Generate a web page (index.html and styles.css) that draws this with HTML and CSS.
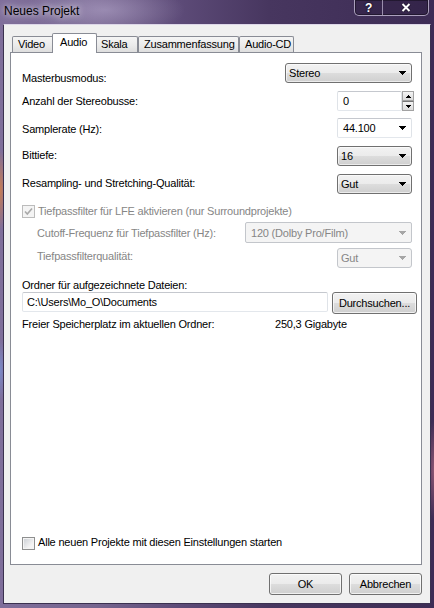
FILE: index.html
```html
<!DOCTYPE html>
<html>
  <head>
    <meta charset="utf-8">
    <title>Neues Projekt</title>
    <link rel="stylesheet" href="styles.css">
  </head>
  <body>
    <div class="window">
      <!-- Titelleiste -->
      <div class="titlebar">
        <span class="title">Neues Projekt</span>
        <div class="caption-buttons">
          <span class="caption-btn help">?</span>
          <span class="caption-btn close">
            <svg width="10" height="9" viewBox="0 0 10 9"><path d="M1.5 1 8.5 8M8.5 1 1.5 8" stroke="#1b1428" stroke-width="3.4"/><path d="M1.5 1 8.5 8M8.5 1 1.5 8" stroke="#fff" stroke-width="2"/></svg>
          </span>
        </div>
      </div>

      <div class="client">
        <div class="tabs">
          <div class="tab tab-video">Video</div>
          <div class="tab tab-audio active">Audio</div>
          <div class="tab tab-skala">Skala</div>
          <div class="tab tab-summary">Zusammenfassung</div>
          <div class="tab tab-cd">Audio-CD</div>
        </div>

        <div class="pane">
          <div class="row row-master">
            <span class="label">Masterbusmodus:</span>
            <div class="combo combo-master">
              <span>Stereo</span>
              <svg class="arrow" width="7" height="4" viewBox="0 0 7 4"><path d="M0 0h7v1h-1v1h-1v1h-1v1h-1v-1h-1v-1h-1v-1h-1z"/></svg>
            </div>
          </div>

          <div class="row row-busses">
            <span class="label">Anzahl der Stereobusse:</span>
            <div class="spinner">
              <div class="textbox spin-text">0</div>
              <div class="spin">
                <span class="spin-btn"><svg width="5" height="3" viewBox="0 0 5 3"><path d="M2 0h1v1h1v1h1v1h-5v-1h1v-1h1z"/></svg></span>
                <span class="spin-btn"><svg width="5" height="3" viewBox="0 0 5 3"><path d="M0 0h5v1h-1v1h-1v1h-1v-1h-1v-1h-1z"/></svg></span>
              </div>
            </div>
          </div>

          <div class="row row-rate">
            <span class="label">Samplerate (Hz):</span>
            <div class="combo combo-small combo-edit">
              <span>44.100</span>
              <svg class="arrow" width="7" height="4" viewBox="0 0 7 4"><path d="M0 0h7v1h-1v1h-1v1h-1v1h-1v-1h-1v-1h-1v-1h-1z"/></svg>
            </div>
          </div>

          <div class="row row-depth">
            <span class="label">Bittiefe:</span>
            <div class="combo combo-small">
              <span>16</span>
              <svg class="arrow" width="7" height="4" viewBox="0 0 7 4"><path d="M0 0h7v1h-1v1h-1v1h-1v1h-1v-1h-1v-1h-1v-1h-1z"/></svg>
            </div>
          </div>

          <div class="row row-quality">
            <span class="label">Resampling- und Stretching-Qualität:</span>
            <div class="combo combo-small">
              <span>Gut</span>
              <svg class="arrow" width="7" height="4" viewBox="0 0 7 4"><path d="M0 0h7v1h-1v1h-1v1h-1v1h-1v-1h-1v-1h-1v-1h-1z"/></svg>
            </div>
          </div>

          <!-- LFE-Optionen, deaktiviert -->
          <div class="row row-lfe">
            <div class="check-label disabled">
              <span class="check check-disabled">
                <svg width="11" height="11" viewBox="0 0 11 11"><path d="M2 5.5 4.3 8 9 2.5" fill="none" stroke="#a9a9a9" stroke-width="1.6"/></svg>
              </span>
              <span>Tiefpassfilter für LFE aktivieren (nur Surroundprojekte)</span>
            </div>
          </div>

          <div class="row row-cutoff">
            <span class="label indent disabled">Cutoff-Frequenz für Tiefpassfilter (Hz):</span>
            <div class="combo combo-cutoff combo-edit combo-disabled">
              <span>120 (Dolby Pro/Film)</span>
              <svg class="arrow" width="7" height="4" viewBox="0 0 7 4"><path d="M0 0h7v1h-1v1h-1v1h-1v1h-1v-1h-1v-1h-1v-1h-1z"/></svg>
            </div>
          </div>

          <div class="row row-lfq">
            <span class="label indent disabled">Tiefpassfilterqualität:</span>
            <div class="combo combo-small combo-disabled">
              <span>Gut</span>
              <svg class="arrow" width="7" height="4" viewBox="0 0 7 4"><path d="M0 0h7v1h-1v1h-1v1h-1v1h-1v-1h-1v-1h-1v-1h-1z"/></svg>
            </div>
          </div>

          <div class="row row-folder-label">
            <span class="label">Ordner für aufgezeichnete Dateien:</span>
          </div>

          <div class="row row-folder">
            <div class="textbox folder-path">C:\Users\Mo_O\Documents</div>
            <button class="btn btn-browse">Durchsuchen...</button>
          </div>

          <div class="row row-free">
            <span class="label free-label">Freier Speicherplatz im aktuellen Ordner:</span>
            <span>250,3 Gigabyte</span>
          </div>

          <div class="spacer"></div>

          <div class="row row-all">
            <div class="check-label">
              <span class="check"></span>
              <span>Alle neuen Projekte mit diesen Einstellungen starten</span>
            </div>
          </div>
        </div>

        <div class="footer">
          <button class="btn">OK</button>
          <button class="btn">Abbrechen</button>
        </div>
      </div>
    </div>
  </body>
</html>
```

FILE: styles.css
```css
* {
  box-sizing: border-box;
}

html,
body {
  margin: 0;
  padding: 0;
}

body {
  width: 434px;
  height: 608px;
  overflow: hidden;
  font-family: "Liberation Sans", Arial, sans-serif;
  font-size: 11px;
  line-height: 14px;
  /* die Dialogschrift ist etwas schmaler als Arial */
  letter-spacing: -0.2px;
  color: #000;
  /* Aero-Glas: links hell, rechts dunkel */
  background:
    radial-gradient(ellipse 80px 26px at 105px 10px, rgba(200, 188, 222, 0.45), transparent),
    radial-gradient(ellipse 8px 40px at 0 190px, rgba(214, 128, 70, 0.85), transparent),
    radial-gradient(ellipse 6px 30px at 0 370px, rgba(120, 150, 220, 0.7), transparent),
    radial-gradient(ellipse 8px 50px at 434px 470px, rgba(206, 120, 140, 0.55), transparent),
    linear-gradient(90deg, #7f6e9b 0%, #76658f 22%, #5c4a77 42%, #47365f 62%, #3d2c55 100%);
}

.window {
  height: 608px;
  display: flex;
  flex-direction: column;
}

/* Titelleiste */
.titlebar {
  flex: none;
  height: 24px;
  display: flex;
  justify-content: space-between;
  align-items: flex-start;
  padding-left: 4px;
}

.title {
  font-size: 12px;
  letter-spacing: 0;
  padding-top: 4px;
  text-shadow: 0 0 6px rgba(255, 255, 255, 0.8), 0 0 12px rgba(255, 255, 255, 0.5);
}

.caption-buttons {
  display: flex;
  height: 16px;
  margin-right: 5px;
  border: 1px solid rgba(222, 212, 238, 0.7);
  border-top: none;
  border-radius: 0 0 5px 5px;
  background: rgba(36, 24, 54, 0.35);
  box-shadow: inset 0 0 0 1px rgba(0, 0, 0, 0.35);
}

.caption-btn {
  display: flex;
  align-items: center;
  justify-content: center;
  color: #fff;
  font-weight: bold;
  font-size: 12px;
  text-shadow: 0 0 2px #1b1428, 0 0 2px #1b1428;
}

.help {
  width: 28px;
  border-right: 1px solid rgba(222, 212, 238, 0.6);
}

.close {
  width: 45px;
  padding-bottom: 1px;
}

/* Client-Bereich */
.client {
  flex: 1;
  margin: 0 3px 4px 3px;
  border: 1px solid #3b3150;
  border-top-color: #ddd7e8;
  background: #f0f0f0;
  display: flex;
  flex-direction: column;
  padding: 8px 8px 0 6px;
}

.tabs {
  flex: none;
  height: 19px;
  display: flex;
  align-items: flex-end;
  padding-left: 2px;
}

.tab {
  height: 16px;
  border: 1px solid #898c95;
  border-bottom: none;
  border-radius: 2px 2px 0 0;
  background: linear-gradient(#f5f5f5, #ebebeb 55%, #dedede);
  padding-left: 5px;
  white-space: nowrap;
}

.tab-video { width: 42px; }
.tab-audio { width: 41px; }
.tab-skala { width: 43px; }
.tab-summary { width: 101px; }
.tab-cd { width: 55px; }

.tab.active {
  width: 45px;
  height: 20px;
  margin: 0 -2px -1px;
  padding-left: 7px;
  padding-top: 1px;
  background: #fff;
  position: relative;
  z-index: 1;
}

.pane {
  flex: 1;
  border: 1px solid #898c95;
  background: #fff;
  display: flex;
  flex-direction: column;
  padding: 10px 9px 14px 11px;
}

.row {
  flex: none;
  display: flex;
  justify-content: space-between;
  align-items: flex-start;
}

.row-master { height: 28px; }
.row-master .label { padding-top: 8px; }

.row-busses { height: 27px; }
.row-busses .label { padding-top: 3px; }

.row-rate { height: 28px; }
.row-rate .label { padding-top: 4px; }

.row-depth { height: 28px; }
.row-depth .label { padding-top: 2px; }

.row-quality { height: 30px; }
.row-quality .label { padding-top: 2px; }

.row-lfe { height: 18px; }

.row-cutoff { height: 26px; }
.row-cutoff .label { padding-top: 4px; }

.row-lfq { height: 30px; }
.row-lfq .label { padding-top: 1px; }

.row-folder-label { height: 14px; }

.row-folder { height: 25px; }

.row-free {
  height: 14px;
  justify-content: flex-start;
}

.free-label {
  width: 253px;
}

.spacer {
  flex: 1;
}

.indent {
  padding-left: 15px;
}

.disabled {
  color: #868686;
}

/* Kombinationsfelder */
.combo {
  height: 20px;
  display: flex;
  align-items: center;
  justify-content: space-between;
  padding: 0 5px 0 3px;
  border: 1px solid #707070;
  border-radius: 3px;
  background: linear-gradient(#f2f2f2, #ebebeb 50%, #dddddd 50%, #cfcfcf);
  box-shadow: inset 0 0 0 1px rgba(255, 255, 255, 0.6);
  white-space: nowrap;
}

.combo-master { width: 127px; }
.combo-small { width: 75px; }
.combo-cutoff {
  width: 167px;
  height: 21px;
}

.combo-edit {
  background: #fff;
  border-color: #c5c8ce #dfe3e8 #e3e7ec #dfe3e8;
  border-radius: 2px;
  box-shadow: none;
  padding-left: 5px;
}

.combo-disabled {
  color: #868686;
  border-color: #c3c6cb;
  background: #f4f4f4;
  box-shadow: none;
}

.combo-disabled .arrow {
  fill: #a6a6a6;
}

.arrow {
  flex: none;
  fill: #000;
}

/* Drehfeld */
.spinner {
  display: flex;
  margin-right: -2px;
}

.textbox {
  height: 20px;
  display: flex;
  align-items: center;
  padding-left: 4px;
  background: #fff;
  border: 1px solid;
  border-color: #c5c8ce #dfe3e8 #e3e7ec #dfe3e8;
  border-radius: 2px;
  white-space: nowrap;
}

.spin-text {
  width: 65px;
  padding-left: 5px;
}

.spin {
  width: 12px;
  height: 20px;
  display: flex;
  flex-direction: column;
}

.spin-btn {
  flex: 1;
  display: flex;
  align-items: center;
  justify-content: center;
  border: 1px solid #a2a2a2;
  background: linear-gradient(#f4f4f4, #dadada);
}

.spin-btn + .spin-btn {
  border-top-color: #777;
}

.folder-path {
  width: 306px;
}

/* Schaltflächen */
.btn {
  font: inherit;
  letter-spacing: inherit;
  color: #000;
  height: 22px;
  padding: 0;
  border: 1px solid #707070;
  border-radius: 3px;
  background: linear-gradient(#f2f2f2, #ebebeb 50%, #dddddd 50%, #cfcfcf);
  box-shadow: inset 0 0 0 1px rgba(255, 255, 255, 0.7);
}

.btn-browse {
  width: 85px;
  margin-right: -5px;
}

.footer {
  flex: none;
  display: flex;
  justify-content: flex-end;
  gap: 7px;
  padding: 8px 0;
}

.footer .btn {
  width: 73px;
}

/* Kontrollkästchen */
.check-label {
  display: flex;
  align-items: flex-start;
  gap: 3px;
}

.check {
  flex: none;
  width: 13px;
  height: 13px;
  margin-top: 1px;
  border: 1px solid #8e8f8f;
  background: linear-gradient(135deg, #c9cdd3, #f4f4f4 70%);
  box-shadow: inset 0 0 0 1px #f4f4f4;
  display: flex;
  align-items: center;
  justify-content: center;
}

.check-disabled {
  border-color: #bcbcbc;
  background: #f4f4f4;
}

.row-all .check {
  margin-top: 2px;
}
```
